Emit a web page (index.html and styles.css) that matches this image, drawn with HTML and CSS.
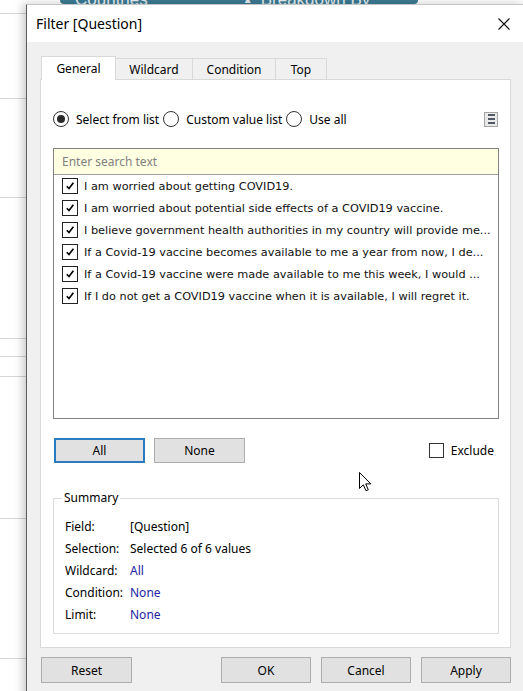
FILE: index.html
```html
<!DOCTYPE html>
<html>
<head>
<meta charset="utf-8">
<title>Filter [Question]</title>
<link rel="stylesheet" href="styles.css">
</head>
<body>
<div class="backdrop">
  <div class="sidelines">
    <div class="bl bl1"></div>
    <div class="bl bl2"></div>
    <div class="bl bl3"></div>
    <div class="bl bl4"></div>
    <div class="bl bl5"></div>
    <div class="bl bl6"></div>
    <div class="bl bl7"></div>
    <div class="bl bl8"></div>
  </div>
  <div class="topbar">
    <span class="tb-a">Countries</span>
    <span class="tb-tri">▲</span>
    <span class="tb-b">Breakdown By</span>
  </div>
</div>

<div class="dialog">
  <div class="titlebar">
    <span class="title">Filter [Question]</span>
    <svg class="close" width="12" height="12" viewBox="0 0 12 12"><path d="M0.5 0.5 L11.5 11.5 M11.5 0.5 L0.5 11.5" stroke="#111" stroke-width="1.1" fill="none"/></svg>
  </div>
  <div class="dbody">
    <div class="tabs">
      <div class="tab active t1">General</div>
      <div class="tab t2">Wildcard</div>
      <div class="tab t3">Condition</div>
      <div class="tab t4">Top</div>
    </div>
    <div class="panel">
      <div class="radiorow">
        <label class="radio"><span class="rb on"></span>Select from list</label>
        <label class="radio"><span class="rb"></span>Custom value list</label>
        <label class="radio"><span class="rb"></span>Use all</label>
        <span class="menuicon"><i></i><i></i><i></i></span>
      </div>
      <div class="listbox">
        <div class="search">Enter search text</div>
        <ul class="items">
          <li><span class="cb"><svg width="10" height="10" viewBox="0 0 10 10"><path d="M1.8 5.2 L4 7.6 L8.4 1.8" stroke="#000" stroke-width="1.6" fill="none"/></svg></span><span class="itxt">I am worried about getting COVID19.</span></li>
          <li><span class="cb"><svg width="10" height="10" viewBox="0 0 10 10"><path d="M1.8 5.2 L4 7.6 L8.4 1.8" stroke="#000" stroke-width="1.6" fill="none"/></svg></span><span class="itxt">I am worried about potential side effects of a COVID19 vaccine.</span></li>
          <li><span class="cb"><svg width="10" height="10" viewBox="0 0 10 10"><path d="M1.8 5.2 L4 7.6 L8.4 1.8" stroke="#000" stroke-width="1.6" fill="none"/></svg></span><span class="itxt">I believe government health authorities in my country will provide me...</span></li>
          <li><span class="cb"><svg width="10" height="10" viewBox="0 0 10 10"><path d="M1.8 5.2 L4 7.6 L8.4 1.8" stroke="#000" stroke-width="1.6" fill="none"/></svg></span><span class="itxt">If a Covid-19 vaccine becomes available to me a year from now, I de...</span></li>
          <li><span class="cb"><svg width="10" height="10" viewBox="0 0 10 10"><path d="M1.8 5.2 L4 7.6 L8.4 1.8" stroke="#000" stroke-width="1.6" fill="none"/></svg></span><span class="itxt">If a Covid-19 vaccine were made available to me this week, I would ...</span></li>
          <li><span class="cb"><svg width="10" height="10" viewBox="0 0 10 10"><path d="M1.8 5.2 L4 7.6 L8.4 1.8" stroke="#000" stroke-width="1.6" fill="none"/></svg></span><span class="itxt">If I do not get a COVID19 vaccine when it is available, I will regret it.</span></li>
        </ul>
      </div>
      <div class="btnrow">
        <button class="btn focused">All</button>
        <button class="btn none">None</button>
        <label class="exclude"><span class="cbx"></span>Exclude</label>
      </div>
      <fieldset class="summary">
        <legend>Summary</legend>
        <div class="srows">
          <div class="srow"><span class="sk">Field:</span><span>[Question]</span></div>
          <div class="srow"><span class="sk">Selection:</span><span>Selected 6 of 6 values</span></div>
          <div class="srow"><span class="sk">Wildcard:</span><span class="sv">All</span></div>
          <div class="srow"><span class="sk">Condition:</span><span class="sv">None</span></div>
          <div class="srow"><span class="sk">Limit:</span><span class="sv">None</span></div>
        </div>
      </fieldset>
    </div>
    <div class="footer">
      <button class="btn fb reset">Reset</button>
      <button class="btn fb ok">OK</button>
      <button class="btn fb">Cancel</button>
      <button class="btn fb">Apply</button>
    </div>
  </div>
  <svg class="cursor" width="13" height="20" viewBox="0 0 13 20"><path d="M0.5 0.5 L0.5 16.5 L4.3 12.8 L7 18.8 L9.3 17.8 L6.7 11.9 L11.8 11.9 Z" fill="#fff" stroke="#000" stroke-width="1" stroke-linejoin="miter"/></svg>
</div>
</body>
</html>
```
FILE: styles.css
```css
* { box-sizing: border-box; }
html, body { margin: 0; padding: 0; }
body {
  width: 523px;
  height: 691px;
  overflow: hidden;
  position: relative;
  background: #fff;
  font-family: "Noto Sans", "Open Sans", sans-serif;
  font-size: 12px;
  color: #000;
}

/* background application */
.backdrop { display: flex; align-items: flex-start; }
.sidelines { width: 60px; display: flex; flex-direction: column; }
.bl { border-bottom: 1px solid #d6d6d6; }
.bl1 { height: 14px; }
.bl2 { height: 85px; }
.bl3 { height: 99px; }
.bl4 { height: 141px; }
.bl5 { height: 18px; }
.bl6 { height: 20px; }
.bl7 { height: 142px; }
.bl8 { height: 140px; }
.topbar {
  width: 358px;
  height: 4px;
  background: #3c7b94;
  border-radius: 0 0 5px 5px;
  overflow: hidden;
  display: flex;
  align-items: flex-end;
  font-family: "Liberation Sans", sans-serif;
  font-size: 17px;
  color: #e8f0f3;
}
.topbar span { line-height: 17px; margin-bottom: -4px; white-space: nowrap; }
.tb-a { margin-left: 15px; }
.tb-tri { margin-left: 95px; font-size: 10px; }
.tb-b { margin-left: 8px; }

/* dialog window */
.dialog {
  position: absolute;
  left: 26px;
  top: 4px;
  width: 499px;
  height: 700px;
  background: #f0f0f0;
  border: 1px solid #c6c6c6;
  border-left-color: #5c5c5c;
  box-shadow: -3px 0 9px rgba(0,0,0,0.22);
}
.titlebar {
  height: 37px;
  background: #fff;
  display: flex;
  align-items: center;
  justify-content: space-between;
  padding: 0 14px 0 9px;
}
.title { font-size: 14px; }
.close { display: block; }

.dbody { padding: 14px 13px 0 13px; }
.tabs { display: flex; align-items: flex-start; height: 23px; padding-left: 1px; }
.tab {
  height: 21px;
  margin-top: 2px;
  margin-left: -1px;
  border: 1px solid #d9d9d9;
  border-bottom: 0;
  background: #f0f0f0;
  display: flex;
  align-items: center;
  justify-content: center;
}
.tab.active {
  height: 24px;
  margin-top: 0;
  margin-left: 0;
  background: #fff;
  position: relative;
  z-index: 1;
}
.t1 { width: 75px; }
.t2 { width: 78px; }
.t3 { width: 84px; }
.t4 { width: 52px; }

.panel {
  height: 569px;
  background: #fff;
  border: 1px solid #d9d9d9;
  padding: 29px 11px 0 12px;
  display: flex;
  flex-direction: column;
}
.radiorow { height: 20px; display: flex; align-items: center; }
.radio { display: flex; align-items: center; gap: 7px; margin-right: 4px; }
.rb {
  width: 16px; height: 16px;
  border: 1px solid #333;
  border-radius: 50%;
  display: flex; align-items: center; justify-content: center;
}
.rb.on::after {
  content: "";
  width: 8px; height: 8px;
  border-radius: 50%;
  background: #2b2b2b;
}
.menuicon {
  margin-left: auto;
  margin-right: 1px;
  width: 14px; height: 15px;
  border: 1px solid #a3a3a3;
  background: #e9e9e9;
  display: flex; flex-direction: column; align-items: center; justify-content: center;
  gap: 2px;
}
.menuicon i { display: block; width: 7px; height: 2px; background: #525866; }

.listbox {
  margin-top: 19px;
  height: 271px;
  border: 1px solid #828282;
  display: flex;
  flex-direction: column;
}
.search {
  height: 26px;
  background: #ffffe1;
  border-bottom: 1px solid #a0a0a0;
  padding-left: 8px;
  color: #7f7f7f;
  display: flex;
  align-items: center;
}
.items { list-style: none; margin: 0; padding: 0 0 0 8px; }
.items li { height: 22px; display: flex; align-items: center; overflow: hidden; }
.cb {
  flex: none;
  width: 16px; height: 16px;
  border: 1px solid #222;
  display: flex; align-items: center; justify-content: center;
  margin-right: 6px;
}
.cb svg { display: block; }
.itxt {
  font-family: "DejaVu Sans", sans-serif;
  font-size: 11.3px;
  white-space: nowrap;
  color: #111;
}

.btnrow { margin-top: 19px; height: 25px; display: flex; align-items: center; }
.btn {
  font: inherit;
  color: #000;
  height: 25px;
  width: 91px;
  background: #e1e1e1;
  border: 1px solid #adadad;
  padding: 0;
}
.btn.focused { margin-left: 1px; border: 2px solid #2a7ac0; }
.btn.none { margin-left: 9px; }
.exclude { margin-left: auto; margin-right: 5px; display: flex; align-items: center; gap: 7px; }
.cbx { width: 15px; height: 15px; border: 1px solid #333; background: #fff; }

.summary {
  margin: 27px 0 0 0;
  padding: 0 0 8px 0;
  border: 1px solid #dcdcdc;
  min-width: 0;
}
.summary legend { margin-left: 8px; padding: 0 2px; line-height: 16px; }
.srows { padding: 9px 0 0 11px; }
.srow { height: 22px; display: flex; align-items: center; }
.sk { width: 65px; }
.sv { color: #2323a3; }

.footer { display: flex; margin-top: 9px; padding-left: 1px; gap: 10px; }
.fb { height: 26px; width: 90px; }
.fb.reset { width: 91px; }
.fb.ok { margin-left: auto; }

.cursor { position: absolute; left: 332px; top: 467px; }
```
